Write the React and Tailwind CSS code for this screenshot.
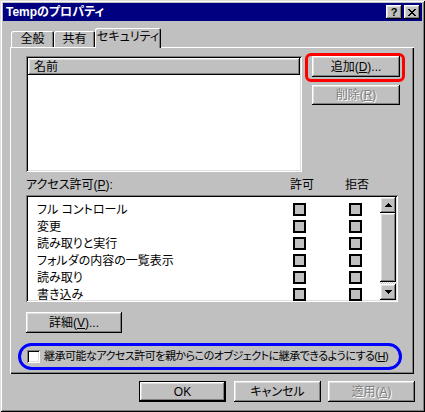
import React from 'react'

const raised = 'bg-[#c0c0c0] shadow-[inset_-1px_-1px_#000,inset_1px_1px_#fff,inset_-2px_-2px_#808080,inset_2px_2px_#dfdfdf]'
const sunken = 'shadow-[inset_1px_1px_#808080,inset_-1px_-1px_#fff,inset_2px_2px_#000,inset_-2px_-2px_#dfdfdf]'
const disabledText = 'text-[#808080] [text-shadow:1px_1px_0_#fff]'

const perms = [ 'フル コントロール', '変更', '読み取りと実行', 'フォルダの内容の一覧表示', '読み取り', '書き込み' ]

const Button = ( { children , className = '' , disabled } ) => (
  <div className={ `${ raised } flex items-center justify-center ${ disabled ? disabledText : '' } ${ className }` }>
    { children }
  </div>
)

const GrayBox = () => (
  <div className="w-[13px] h-[13px] bg-[#c0c0c0] border-2 border-black shrink-0" />
)

export default function App () {
  return (
    <div className="w-[425px] h-[412px] bg-[#c0c0c0] p-[3px] flex flex-col text-[12px] leading-none text-black font-['Liberation_Sans','Noto_Sans_CJK_JP',sans-serif] [font-feature-settings:'palt'] shadow-[inset_1px_1px_#dfdfdf,inset_-1px_-1px_#000,inset_2px_2px_#fff,inset_-2px_-2px_#808080]">

      {/* title bar */}
      <div className="h-[18px] bg-[#000080] flex items-center justify-between pl-[3px] pr-[2px]">
        <span className="text-white font-bold text-[12px]">Tempのプロパティ</span>
        <div className="flex items-center">
          <div className={ `${ raised } w-[16px] h-[14px] flex items-center justify-center font-bold text-[11px]` }>?</div>
          <div className={ `${ raised } w-[16px] h-[14px] ml-[2px] flex items-center justify-center` }>
            <svg width="8" height="7" viewBox="0 0 8 7">
              <path d="M0 0h2v1h1v1h2V1h1V0h2v1H7v1H6v1H5v1h1v1h1v1h1v1H6V6H5V5H3v1H2v1H0V6h1V5h1V4h1V3H2V2H1V1H0z" fill="#000" />
            </svg>
          </div>
        </div>
      </div>

      {/* tabs */}
      <div className="h-[19px] mt-[7px] pl-[8px] flex items-end">
        <div className="w-[43px] h-[16px] flex items-center justify-center rounded-t-[2px] shadow-[inset_1px_1px_#fff,inset_-1px_0_#000,inset_-2px_0_#808080]">全般</div>
        <div className="w-[41px] h-[16px] flex items-center justify-center rounded-t-[2px] shadow-[inset_1px_1px_#fff,inset_-1px_0_#000,inset_-2px_0_#808080]">共有</div>
        <div className="relative z-10 w-[66px] h-[20px] -mb-[1px] bg-[#c0c0c0] flex items-center justify-center pb-[2px] rounded-t-[2px] shadow-[inset_1px_1px_#fff,inset_-1px_0_#000,inset_-2px_0_#808080]">セキュリティ</div>
      </div>

      {/* panel */}
      <div className="ml-[7px] w-[404px] h-[327px] pl-[16px] pt-[9px] flex flex-col shadow-[inset_1px_1px_#fff,inset_-1px_-1px_#000,inset_-2px_-2px_#808080]">

        <div className="flex">
          <div className={ `${ sunken } w-[276px] h-[116px] bg-white p-[2px]` }>
            <div className={ `${ raised } h-[17px] flex items-center pl-[6px]` }>名前</div>
          </div>
          <div className="ml-[10px] flex flex-col">
            <div className="relative">
              <Button className="w-[88px] h-[21px]">追加(<span className="underline">D</span>)...</Button>
              <div className="absolute -left-[7px] -right-[5px] -top-[3px] -bottom-[5px] border-[3px] border-[#ff0000] rounded-[6px]" />
            </div>
            <Button disabled className="w-[88px] h-[20px] mt-[8px]">削除(<span className="underline">R</span>)</Button>
          </div>
        </div>

        <div className="mt-[5px] h-[16px] flex items-center">
          <span className="w-[264px]">アクセス許可(<span className="underline">P</span>):</span>
          <span className="w-[55px]">許可</span>
          <span>拒否</span>
        </div>

        <div className={ `${ sunken } mt-[2px] w-[372px] h-[107px] bg-white flex overflow-hidden` }>
          <div className="flex-1 pt-[6px] pl-[11px] overflow-hidden">
            { perms.map ( p => (
              <div key={ p } className="h-[17px] flex items-center">
                <span className="w-[256px] whitespace-nowrap">{ p }</span>
                <GrayBox />
                <div className="w-[43px]" />
                <GrayBox />
              </div>
            ) ) }
          </div>
          <div className="w-[16px] my-[2px] mr-[2px] flex flex-col">
            <div className={ `${ raised } h-[16px] flex items-center justify-center` }>
              <svg width="7" height="4" viewBox="0 0 7 4"><path d="M3 0h1v1h1v1h1v1h1v1H0V3h1V2h1V1h1z" fill="#000" /></svg>
            </div>
            <div className={ `${ raised } h-[69px]` } />
            <div className="flex-1 bg-[repeating-conic-gradient(#fff_0_25%,#c0c0c0_0_50%)] bg-[length:2px_2px]" />
            <div className={ `${ raised } h-[16px] flex items-center justify-center` }>
              <svg width="7" height="4" viewBox="0 0 7 4"><path d="M0 0h7v1H6v1H5v1H4v1H3V3H2V2H1V1H0z" fill="#000" /></svg>
            </div>
          </div>
        </div>

        <Button className="mt-[10px] w-[96px] h-[21px]">詳細(<span className="underline">V</span>)...</Button>

        <div className="mt-[10px] -ml-[8px] w-[384px] h-[27px] border-[3px] border-[#0000ff] rounded-full flex items-center pl-[6px]">
          <div className={ `${ sunken } w-[13px] h-[13px] bg-white shrink-0` } />
          <span className="ml-[4px] whitespace-nowrap text-[11px] tracking-[-0.5px]">継承可能なアクセス許可を親からこのオブジェクトに継承できるようにする(<span className="underline">H</span>)</span>
        </div>
      </div>

      {/* dialog buttons */}
      <div className="mt-[7px] h-[21px] flex justify-end pr-[7px]">
        <div className="w-[87px] h-[21px] border border-black">
          <Button className="w-full h-full">OK</Button>
        </div>
        <Button className="ml-[8px] w-[87px] h-[21px]">キャンセル</Button>
        <Button disabled className="ml-[7px] w-[87px] h-[21px]">適用(<span className="underline">A</span>)</Button>
      </div>
    </div>
  )
}
